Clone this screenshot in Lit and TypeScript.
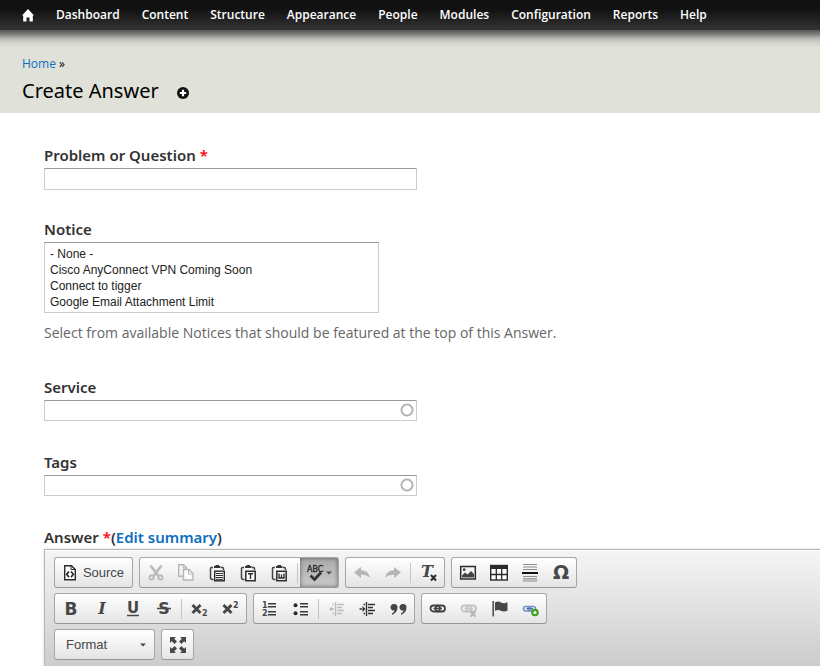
import { LitElement, html, css, svg, nothing } from "lit";
import { customElement } from "lit/decorators.js";

const dark = "#474747";
const ink = "#2b2b2b";

const clipboard = svg`
  <path d="M4 3.500H2.500Q1.500 3.500 1.500 4.500V13.500Q1.500 15.500 3.500 15.500H4.500M12 3.500H13.500Q14.500 3.500 14.500 5V6" fill="none" stroke="#444" stroke-width="1.500"/>
  <path d="M5 4V2H6.500V1H10V2H11.500V4Z" fill="#333"/>`;

const chain = (color: string) => svg`
  <rect x="1.500" y="5.500" width="9.500" height="6" rx="3" fill="none" stroke=${color} stroke-width="1.800"/>
  <rect x="6.500" y="5.500" width="9.500" height="6" rx="3" fill="none" stroke=${color} stroke-width="1.800"/>
  <path d="M4.500 8.500H13" stroke=${color} stroke-width="1.500"/>`;

const indentLines = svg`
  <path d="M7.500 2V16" stroke="currentColor" stroke-width="1.400"/>
  <path d="M9 4.500H16M9 7.500H14M9 10.500H16M9 13.500H14M4.500 4.500H6M4.500 13.500H6" stroke="currentColor" stroke-width="1.500"/>`;

const icons: Record<string, unknown> = {
  source: svg`
    <path d="M3.700 1.700H10.500L14.300 5.500V15.800H3.700Z" fill="#fff" stroke=${ink} stroke-width="1.400"/>
    <path d="M10 2V5.500H14" fill="none" stroke=${ink} stroke-width="1"/>
    <path d="M8 7.500L5.700 10.300L8 13.100M10 7.500L12.300 10.300L10 13.100" fill="none" stroke=${ink} stroke-width="1.700"/>`,
  cut: svg`
    <path d="M3.500 1.500L11.500 12M14.500 1.500L6.500 12" stroke="#b9b9b9" stroke-width="2.600"/>
    <circle cx="4.600" cy="13.500" r="2.100" fill="none" stroke="#b9b9b9" stroke-width="1.900"/>
    <circle cx="13.400" cy="13.500" r="2.100" fill="none" stroke="#b9b9b9" stroke-width="1.900"/>`,
  copy: svg`
    <path d="M5 12.300H0.700V0.700H5.500L8.500 3.700V5.500" fill="none" stroke="#b6b6b6" stroke-width="1.400"/>
    <path d="M5.500 5.500H11L15 9.500V16H5.500Z" fill="#fbfbfb" stroke="#b6b6b6" stroke-width="1.400"/>
    <path d="M10.500 5.500V10H15M5 1V4H8" fill="none" stroke="#b6b6b6"/>`,
  paste: svg`${clipboard}
    <rect x="5.700" y="7.200" width="9.600" height="9.600" fill="#fff" stroke=${ink} stroke-width="1.400"/>
    <path d="M7 9.500H14M7 11.500H14M7 13.500H14M7 15.300H14" stroke=${ink} stroke-width="1"/>`,
  pastetext: svg`${clipboard}
    <rect x="5.800" y="7.300" width="9.400" height="9.400" fill="#fff" stroke=${ink} stroke-width="1.500"/>
    <path d="M8 9.700H13M10.500 9.700V15" stroke=${ink} stroke-width="1.400"/>`,
  pasteword: svg`${clipboard}
    <rect x="5.800" y="7.300" width="9.400" height="9.400" fill="#fff" stroke=${ink} stroke-width="1.500"/>
    <path d="M8 9.500V14H13V9.500M10.500 10.500V14" fill="none" stroke=${ink} stroke-width="1.400"/>`,
  undo: svg`<path d="M1 8.500L8 3V6.300Q15.500 6.500 17 13.500Q13 10.200 8 10.700V14Z" fill="#b5b5b5"/>`,
  redo: svg`<path d="M17 8.500L10 3V6.300Q2.500 6.500 1 13.500Q5 10.200 10 10.700V14Z" fill="#b5b5b5"/>`,
  removeformat: svg`
    <text class="serif" x="1" y="13" font-size="16">T</text>
    <path d="M11 11L16 16.500M16 11L11 16.500" stroke=${ink} stroke-width="2"/>`,
  image: svg`
    <rect x="1.700" y="2.500" width="14.600" height="12.500" fill="#f6f6f6" stroke=${ink} stroke-width="1.500"/>
    <path d="M3 13.500V11.500L6 8.500L8.500 10.500L12 7L15 10V13.500Z" fill="#444"/>
    <circle cx="5.200" cy="5.700" r="1.400" fill="#444"/>`,
  table: svg`
    <rect x="0.700" y="1.500" width="16.600" height="14.500" fill="#fff" stroke=${ink} stroke-width="1.400"/>
    <path d="M0 3H18" stroke=${ink} stroke-width="4"/>
    <path d="M6.300 5V16M11.700 5V16M1 10.500H17" stroke=${ink} stroke-width="1.300"/>`,
  rule: svg`
    <path d="M2 0.500H16M2 3H16M2 5.500H16M2 12.500H16M2 14.800H16M2 17H16" stroke="#8a8a8a" stroke-width="1.200"/>
    <path d="M1 9H17" stroke="#111" stroke-width="2.200"/>`,
  omega: svg`<text class="sans" x="9" y="15" font-size="19" text-anchor="middle">Ω</text>`,
  bold: svg`<text class="sans" x="9" y="15" font-size="17" text-anchor="middle">B</text>`,
  italic: svg`<text class="serif" x="9" y="14" font-size="16" text-anchor="middle">I</text>`,
  underline: svg`<text class="sans" x="9" y="13" font-size="15" text-anchor="middle">U</text>
    <path d="M3 15.500H15" stroke=${dark} stroke-width="1.300"/>`,
  strike: svg`<text class="sans" x="9" y="14" font-size="16" text-anchor="middle">S</text>
    <path d="M2 8.500H16" stroke=${dark} stroke-width="1.500"/>`,
  subscript: svg`<path d="M1.500 5L9.500 13M9.500 5L1.500 13" stroke=${dark} stroke-width="2.900"/>
    <text class="sans" x="11" y="16" font-size="8">2</text>`,
  superscript: svg`<path d="M1.500 5L9.500 13M9.500 5L1.500 13" stroke=${dark} stroke-width="2.900"/>
    <text class="sans" x="11" y="8" font-size="8">2</text>`,
  numbered: svg`<text class="sans" x="1" y="8" font-size="8">1</text>
    <text class="sans" x="1" y="16" font-size="8">2</text>
    <path d="M7 3.700H15M7 6.700H15M7 11.700H15M7 14.700H15" stroke="#3a3a3a" stroke-width="1.500"/>`,
  bulleted: svg`<circle cx="3.500" cy="5.200" r="2" fill=${ink}/><circle cx="3.500" cy="13.200" r="2" fill=${ink}/>
    <path d="M8 3.700H16M8 6.700H16M8 11.700H16M8 14.700H16" stroke="#3a3a3a" stroke-width="1.500"/>`,
  outdent: svg`<g color="#bdbdbd">${indentLines}<path d="M1 9L4 6.500V11.500ZM3 8.300H6V9.700H3Z" fill="currentColor"/></g>`,
  indent: svg`<g color="#333">${indentLines}<path d="M6.500 9L3.500 6V12ZM0.500 8.300H4V9.700H0.500Z" fill="currentColor"/></g>`,
  quote: svg`<path d="M4 4A3.400 3.400 0 0 1 7.500 7.500Q7.500 12.500 2 15V13.500Q4.500 12 4.500 10.500A3.300 3.300 0 1 1 4 4Z" fill=${dark}/>
    <path d="M13 4A3.400 3.400 0 0 1 16.500 7.500Q16.500 12.500 11 15V13.500Q13.500 12 13.500 10.500A3.300 3.300 0 1 1 13 4Z" fill=${dark}/>`,
  link: chain("#444"),
  unlink: svg`${chain("#c4c4c4")}<path d="M10.500 11.500L15.500 16.500M15.500 11.500L10.500 16.500" stroke="#b4b4b4" stroke-width="1.800"/>`,
  anchor: svg`<path d="M2.200 1V16.500" stroke="#555" stroke-width="1.700"/>
    <path d="M4 2.500Q7 0.500 10 2.500Q13 4.200 16.500 2.300V10.500Q13 12.500 10 10.800Q7 9 4 10.800Z" fill=${dark}/>`,
  addlink: svg`<rect x="1.500" y="6.500" width="7.500" height="4.500" rx="2.200" fill="none" stroke="#7192c2" stroke-width="1.600"/>
    <rect x="6" y="6.500" width="7.500" height="4.500" rx="2.200" fill="none" stroke="#7192c2" stroke-width="1.600"/>
    <path d="M4.500 8.700H11" stroke="#4a6da3" stroke-width="1.300"/>
    <circle cx="13" cy="12.500" r="2.700" fill="#fff" stroke="#3fa01f" stroke-width="2.200"/>`,
  maximize: svg`<path d="M1 1H7L5.200 2.800L8 5.600L5.600 8L2.800 5.200L1 7ZM17 1V7L15.200 5.200L12.400 8L10 5.600L12.800 2.800L11 1ZM1 17V11L2.800 12.800L5.600 10L8 12.400L5.200 15.200L7 17ZM17 17H11L12.800 15.200L10 12.400L12.400 10L15.200 12.800L17 11Z" fill=${dark}/>`,
};

@customElement("editor-icon")
class EditorIcon extends LitElement {
  static properties = { name: { type: String } };
  declare name: string;
  static styles = css`
    :host { display: block; width: 18px; height: 18px; }
    svg { display: block; overflow: visible; }
    .sans { font-family: "DejaVu Sans", sans-serif; font-weight: 700; fill: #474747; }
    .serif { font-family: "DejaVu Serif", serif; font-weight: 700; font-style: italic; fill: #474747; }
  `;
  render() {
    return html`<svg width="18" height="18" viewBox="0 0 18 18" aria-hidden="true">${icons[this.name]}</svg>`;
  }
}

const menu = ["Dashboard", "Content", "Structure", "Appearance", "People", "Modules", "Configuration", "Reports", "Help"];
const notices = ["- None -", "Cisco AnyConnect VPN Coming Soon", "Connect to tigger", "Google Email Attachment Limit"];
const rows = [
  [["source"], ["cut", "copy", "paste", "pastetext", "pasteword", "|", "spell"], ["undo", "redo", "|", "removeformat"], ["image", "table", "rule", "omega"]],
  [["bold", "italic", "underline", "strike", "|", "subscript", "superscript"], ["numbered", "bulleted", "|", "outdent", "indent", "quote"], ["link", "unlink", "anchor", "addlink"]],
  [["format"], ["maximize"]],
];

@customElement("app-root")
class AppRoot extends LitElement {
  static styles = css`
    :host {
      display: flex;
      flex-direction: column;
      min-height: 100vh;
      background: #fff;
      color: #333;
      font: 14px/20px "Open Sans", "Noto Sans", sans-serif;
    }
    * { box-sizing: border-box; }
    a { color: #0f6dc0; text-decoration: none; }
    .menu {
      display: flex;
      align-items: center;
      gap: 22px;
      height: 30px;
      padding: 0 22px;
      background: linear-gradient(#111 30%, #343434);
      font-size: 12px;
      font-weight: 600;
      white-space: nowrap;
    }
    .menu a { color: #fff; }
    .menu svg { display: block; }
    .branding {
      display: flex;
      flex-direction: column;
      gap: 4px;
      padding: 24px 22px 8px;
      background: linear-gradient(#555, #7c7c78 4px, #b0b1ab 8px, #d0d1c9 12px, #e0e1d8 18px);
      color: #000;
    }
    .crumbs { font-size: 12px; line-height: 19px; }
    .title { display: flex; align-items: center; gap: 18px; }
    h1 { margin: 0; font: 400 20px/28px "Noto Sans", "Open Sans", sans-serif; }
    .shortcut { display: block; margin-top: 4px; }
    .shortcut svg { display: block; }
    form { display: flex; flex-direction: column; flex: 1; padding: 33px 0 0 44px; }
    .field { display: flex; flex-direction: column; align-items: flex-start; margin-bottom: 30px; }
    .auto { margin-bottom: 32px; }
    .described { margin-bottom: 35px; }
    .label { margin-bottom: 4px; font: 600 15px/18px "Noto Sans", "Open Sans", sans-serif; }
    .required { color: #f00; }
    .text {
      width: 373px;
      max-width: 100%;
      height: 22px;
      padding: 2px;
      border: 1px solid #ccc;
      border-top-color: #999;
      background: #fff;
      font: inherit;
    }
    .auto .text {
      height: 21px;
      padding-right: 20px;
      background: radial-gradient(circle, transparent 4px, #b4b4b4 5px, #b8b8b8 6px, transparent 7px) right 2px top 2px / 14px 14px no-repeat;
    }
    select {
      width: 335px;
      max-width: 100%;
      height: 71px;
      padding: 4px 0 0;
      border: 1px solid #ccc;
      border-top-color: #999;
      border-radius: 0;
      background: #fff;
      font: 12px/16px "Liberation Sans", Arial, sans-serif;
      overflow: hidden;
    }
    option { min-height: 16px; padding: 0 5px; color: #222; line-height: 16px; }
    .hint { margin-top: 10px; color: #666; }
    .editor { display: flex; flex-direction: column; flex: 1; }
    .editor .label { margin-bottom: 3px; }
    .bars {
      display: flex;
      flex-direction: column;
      gap: 5px;
      flex: 1;
      padding: 7px 0 6px 9px;
      border: solid #b6b6b6;
      border-width: 1px 0 0 1px;
      background: linear-gradient(#f5f5f5, #cbcdcb);
      box-shadow: 0 0 3px rgba(0, 0, 0, 0.15), inset 0 1px #fff;
    }
    .row { display: flex; gap: 6px; }
    .group {
      display: flex;
      align-items: center;
      height: 31px;
      border: 1px solid #a6a6a6;
      border-bottom-color: #979797;
      border-radius: 3px;
      background: linear-gradient(#fff, #e4e4e4);
      overflow: hidden;
    }
    .tool {
      display: flex;
      align-items: center;
      justify-content: center;
      width: 31px;
      height: 29px;
      padding: 0;
      border: 0;
      background: none;
      color: #474747;
      font: 13px/16px "Liberation Sans", Arial, sans-serif;
    }
    .source { width: 77px; gap: 4px; padding-right: 2px; }
    .format { width: 99px; justify-content: space-between; padding: 0 8px 0 11px; }
    .spell { width: 38px; gap: 1px; background: linear-gradient(#aaa, #cacaca); box-shadow: inset 0 0 4px rgba(0, 0, 0, 0.5); }
    .sep { width: 1px; height: 20px; margin: 0 2px; background: #c4c4c4; }
    .abc { font: 8px "DejaVu Sans", sans-serif; }
  `;

  renderTool(name: string) {
    const caret = html`<svg width="6" height="4" viewBox="0 0 6 4" aria-hidden="true"><path d="M0 0.500H6L3 3.500Z" fill="#474747"/></svg>`;
    switch (name) {
      case "|":
        return html`<span class="sep"></span>`;
      case "source":
        return html`<button type="button" class="tool source"><editor-icon name="source"></editor-icon>Source</button>`;
      case "format":
        return html`<button type="button" class="tool format">Format ${caret}</button>`;
      case "spell":
        return html`<button type="button" class="tool spell" aria-pressed="true" aria-label="Spell check">
          <svg width="18" height="18" viewBox="0 0 18 18" aria-hidden="true">
            <text class="abc" x="0" y="8" fill="#222" stroke="#222" stroke-width="0.300">ABC</text>
            <path d="M3.500 11.500L7.500 15.500L14 8.500" fill="none" stroke="#333" stroke-width="2.800"/>
          </svg>${caret}</button>`;
      default:
        return html`<button type="button" class="tool" aria-label=${name}><editor-icon name=${name}></editor-icon></button>`;
    }
  }

  renderText(id: string, label: string, required = false, auto = false) {
    return html`<div class="field ${auto ? "auto" : ""}">
      <label class="label" for=${id}>${label}${required ? html` <span class="required">*</span>` : nothing}</label>
      <input class="text" id=${id} type="text">
    </div>`;
  }

  render() {
    return html`
      <nav class="menu">
        <a href="#" aria-label="Home">
          <svg width="12" height="13" viewBox="0 0 12 13"><path d="M6 0L12 6.500H10.800V12.500H7.500V8.500H4.500V12.500H1.200V6.500H0Z" fill="#fff"/></svg>
        </a>
        ${menu.map((item) => html`<a href="#">${item}</a>`)}
      </nav>
      <header class="branding">
        <div class="crumbs"><a href="#">Home</a> »</div>
        <div class="title">
          <h1>Create Answer</h1>
          <a class="shortcut" href="#" aria-label="Add to shortcuts">
            <svg width="12" height="12" viewBox="0 0 12 12"><circle cx="6" cy="6" r="6" fill="#111"/><path d="M6 2.800V9.200M2.800 6H9.200" stroke="#fff" stroke-width="2.200"/></svg>
          </a>
        </div>
      </header>
      <form>
        ${this.renderText("title", "Problem or Question", true)}
        <div class="field described">
          <label class="label" for="notice">Notice</label>
          <select id="notice" multiple size="4">${notices.map((n) => html`<option>${n}</option>`)}</select>
          <div class="hint">Select from available Notices that should be featured at the top of this Answer.</div>
        </div>
        ${this.renderText("service", "Service", false, true)}
        ${this.renderText("tags", "Tags", false, true)}
        <div class="editor">
          <div class="label">Answer <span class="required">*</span>(<a href="#">Edit summary</a>)</div>
          <div class="bars" role="toolbar">
            ${rows.map((row) => html`<div class="row">
              ${row.map((group) => html`<div class="group">${group.map((t) => this.renderTool(t))}</div>`)}
            </div>`)}
          </div>
        </div>
      </form>`;
  }
}
